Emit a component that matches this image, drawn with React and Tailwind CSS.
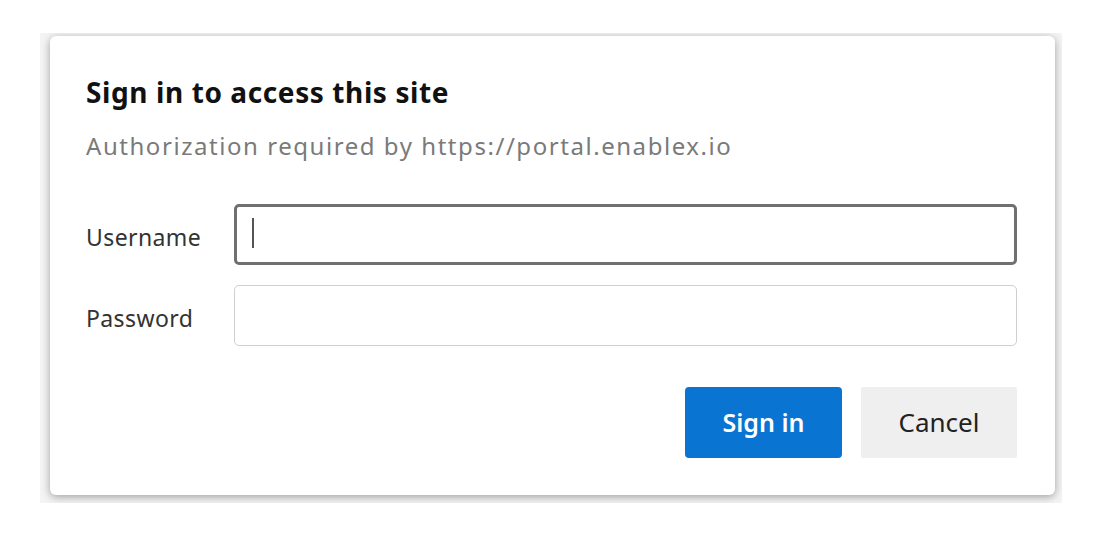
export default function App() {
  return (
    <div className="w-[1100px] h-[540px] bg-white pt-[33px] pl-[40px] font-['Noto_Sans',sans-serif]">
      <div className="w-[1022px] h-[470px] overflow-hidden bg-[#f4f4f4] pt-[3px] pl-[10px] pr-[7px] pb-[8px]">
        <div className="h-full bg-white rounded-[6px] shadow-[0_2px_8px_rgba(0,0,0,0.35)] pl-[36px] pr-[38px] pt-[38px]">
          <h1 className="text-[28px] leading-[36px] font-bold text-[#111] tracking-[0.6px]">
            Sign in to access this site
          </h1>
          <p className="mt-[21px] text-[24px] leading-[30px] text-[#7a7a7a] tracking-[1.55px]">
            Authorization required by https://portal.enablex.io
          </p>

          <div className="mt-[43px] flex flex-col gap-[20px]">
            <div className="flex items-center">
              <label className="w-[148px] pt-[6px] text-[23px] text-[#333] tracking-[0.4px]">Username</label>
              <div className="relative flex-1 h-[61px] border-[3px] border-[#707070] rounded-[5px]">
                <span className="absolute left-[15px] top-[11px] w-[2px] h-[30px] bg-[#555]" />
              </div>
            </div>
            <div className="flex items-center">
              <label className="w-[148px] pt-[6px] text-[23px] text-[#333] tracking-[0.4px]">Password</label>
              <div className="flex-1 h-[61px] border border-[#cfcfcf] rounded-[5px]" />
            </div>
          </div>

          <div className="mt-[41px] flex justify-end gap-[19px]">
            <button className="w-[157px] h-[71px] bg-[#0a74d2] rounded-[4px] text-white text-[25px] font-semibold">
              Sign in
            </button>
            <button className="w-[156px] h-[71px] bg-[#efefef] rounded-[2px] text-[#222] text-[26px]">
              Cancel
            </button>
          </div>
        </div>
      </div>
    </div>
  );
}
